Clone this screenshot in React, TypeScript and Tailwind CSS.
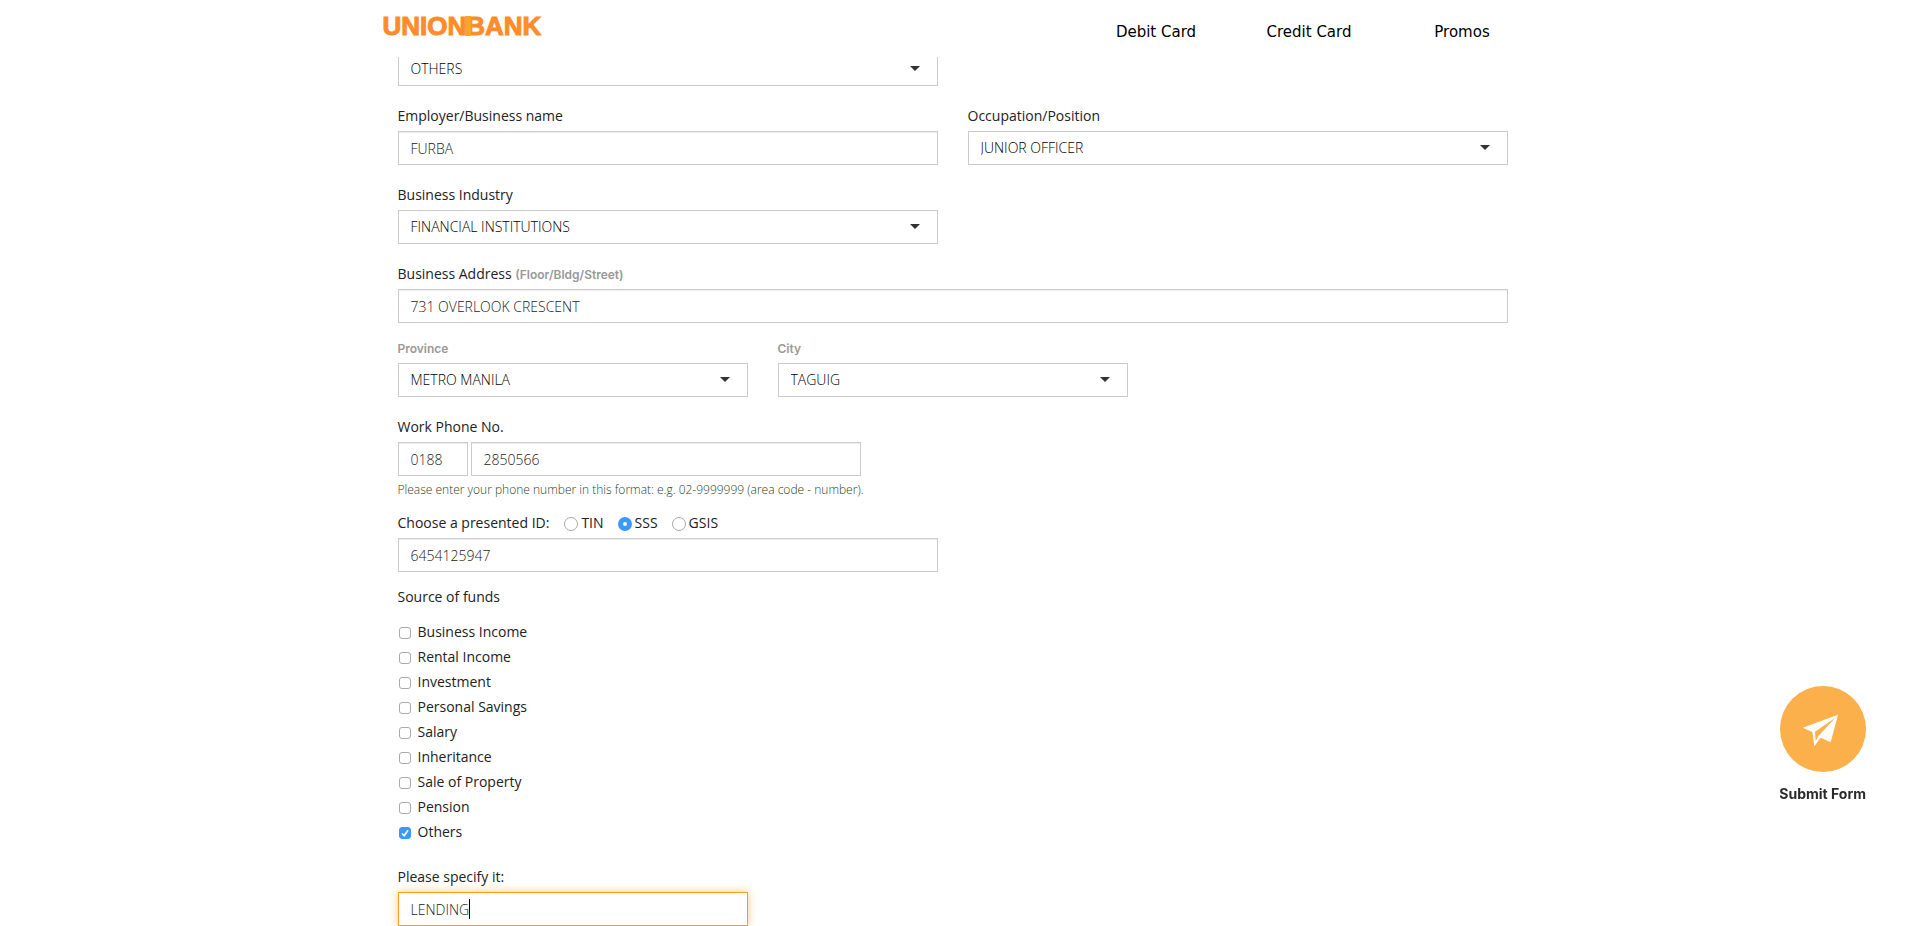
import type { InputHTMLAttributes, ReactNode } from "react";

const labelText = "font-['Open_Sans','Noto_Sans',sans-serif] text-sm leading-5 text-[#222222]";
const mutedText = "font-['Inter',sans-serif] text-xs font-semibold text-[#999999]";

interface TextBoxProps extends InputHTMLAttributes<HTMLInputElement> {
  highlighted?: boolean;
}

function TextBox({ highlighted = false, ...rest }: TextBoxProps) {
  const frame = highlighted
    ? "border-[#f5a01e] shadow-[0_0_8px_rgba(245,160,30,0.6)]"
    : "border-[#cccccc] shadow-[inset_0_1px_1px_rgba(0,0,0,0.075)]";
  return (
    <input
      type="text"
      className={`block h-[34px] w-full border bg-white px-3 text-sm font-light text-[#222222] outline-none ${frame}`}
      {...rest}
    />
  );
}

function SelectBox({ id, value, label }: { id: string; value: string; label?: string }) {
  return (
    <div className="relative">
      <select
        id={id}
        aria-label={label}
        defaultValue={value}
        className="block h-[34px] w-full appearance-none border border-[#cccccc] bg-white px-3 text-sm font-light text-black outline-none"
      >
        <option>{value}</option>
      </select>
      <svg
        viewBox="0 0 10 5"
        className="pointer-events-none absolute top-[14px] right-[18px] h-[5px] w-[10px]"
        aria-hidden="true"
      >
        <path d="M0 0H10L5 5Z" fill="#333333" />
      </svg>
    </div>
  );
}

function Field({ id, label, children }: { id: string; label: ReactNode; children: ReactNode }) {
  return (
    <div>
      <label htmlFor={id} className={`mb-[5px] block ${labelText}`}>
        {label}
      </label>
      {children}
    </div>
  );
}

const navItems = ["Debit Card", "Credit Card", "Promos"];

const idTypes = ["TIN", "SSS", "GSIS"];

const fundSources = [
  "Business Income",
  "Rental Income",
  "Investment",
  "Personal Savings",
  "Salary",
  "Inheritance",
  "Sale of Property",
  "Pension",
  "Others",
];

function Header() {
  return (
    <header className="fixed inset-x-0 top-0 z-10 h-[57px] bg-white">
      <div className="mx-auto flex max-w-[1140px] items-start justify-between">
        <a
          href="#home"
          className="relative mt-3 font-['Liberation_Sans',Arial,sans-serif] text-[26px] leading-7 font-bold text-[#ff8c28] [-webkit-text-stroke:1px_#ff8c28]"
        >
          UNIONBANK
          <span className="absolute top-1 left-[82px] h-5 w-[6px] bg-[#f9a526]" />
        </a>
        <nav className="-mr-4 flex pt-5">
          {navItems.map((name) => (
            <a
              key={name}
              href="#cards"
              className="w-[153px] text-center font-['DejaVu_Sans',sans-serif] text-[15px] leading-6 text-black"
            >
              {name}
            </a>
          ))}
        </nav>
      </div>
    </header>
  );
}

function SubmitButton() {
  return (
    <button
      type="submit"
      form="work-details"
      className="fixed right-[39px] bottom-[122px] z-10 flex flex-col items-center gap-3 font-['Inter',sans-serif] text-sm leading-5 font-bold text-[#2b2b2b]"
    >
      <span className="block size-[86px] rounded-full bg-[#fbb04c]">
        <svg viewBox="0 0 258 258" className="size-full" aria-hidden="true">
          <path
            fill="#ffffff"
            fillRule="evenodd"
            d="M174 86L68 125L97 138L103 181L122 155L152 169ZM166 95L115 150L107 166L105 137Z"
          />
        </svg>
      </span>
      Submit Form
    </button>
  );
}

export default function App() {
  return (
    <div className="min-h-screen bg-white font-['Open_Sans','Noto_Sans',sans-serif]">
      <Header />
      <form
        id="work-details"
        className="mx-auto max-w-[1110px] pt-[52px]"
        onSubmit={(e) => e.preventDefault()}
      >
        <div className="flex flex-col gap-5">
          <div className="grid grid-cols-2 gap-x-[30px]">
            <SelectBox id="work-type" value="OTHERS" label="Nature of work" />
          </div>
          <div className="grid grid-cols-2 gap-x-[30px]">
            <Field id="employer" label="Employer/Business name">
              <TextBox id="employer" defaultValue="FURBA" />
            </Field>
            <Field id="occupation" label="Occupation/Position">
              <SelectBox id="occupation" value="JUNIOR OFFICER" />
            </Field>
          </div>
          <div className="grid grid-cols-2 gap-x-[30px]">
            <Field id="industry" label="Business Industry">
              <SelectBox id="industry" value="FINANCIAL INSTITUTIONS" />
            </Field>
          </div>
          <div>
            <Field
              id="address"
              label={
                <>
                  Business Address{" "}
                  <span className={`leading-4 ${mutedText}`}>(Floor/Bldg/Street)</span>
                </>
              }
            >
              <TextBox id="address" defaultValue="731 OVERLOOK CRESCENT" />
            </Field>
            <div className="mt-4 grid grid-cols-3 gap-x-[30px]">
              <div>
                <label htmlFor="province" className={`mb-1 block leading-5 ${mutedText}`}>
                  Province
                </label>
                <SelectBox id="province" value="METRO MANILA" />
              </div>
              <div>
                <label htmlFor="city" className={`mb-1 block leading-5 ${mutedText}`}>
                  City
                </label>
                <SelectBox id="city" value="TAGUIG" />
              </div>
            </div>
          </div>
          <Field id="phone" label="Work Phone No.">
            <div className="flex gap-[3px]">
              <div className="w-[70px]">
                <TextBox aria-label="Area code" defaultValue="0188" />
              </div>
              <div className="w-[390px]">
                <TextBox id="phone" defaultValue="2850566" />
              </div>
            </div>
            <p className="mt-1 text-xs leading-5 font-light text-[#1f431f]">
              Please enter your phone number in this format: e.g. 02-9999999 (area code - number).
            </p>
          </Field>
        </div>

        <fieldset className={`mt-[13px] mb-[5px] flex items-center ${labelText}`}>
          <legend className="float-left mr-[15px]">Choose a presented ID:</legend>
          <div className="flex gap-[14px]">
            {idTypes.map((name) => (
              <label key={name} className="flex items-center gap-[3px]">
                <input
                  type="radio"
                  name="id-type"
                  defaultChecked={name === "SSS"}
                  className="mt-[2px] size-[14px] appearance-none rounded-full border border-[#aaaaaa] bg-white checked:border-[5px] checked:border-[#3b99fc]"
                />
                {name}
              </label>
            ))}
          </div>
        </fieldset>
        <div className="grid grid-cols-2 gap-x-[30px]">
          <TextBox aria-label="ID number" defaultValue="6454125947" />
        </div>

        <fieldset className={`mt-[15px] ${labelText}`}>
          <legend className="mb-3">Source of funds</legend>
          {fundSources.map((name) => (
            <label key={name} className="flex h-[25px] items-center gap-[7px] pl-[1px]">
              <input
                type="checkbox"
                defaultChecked={name === "Others"}
                className="peer mt-[2px] size-3 appearance-none rounded-[3px] border border-[#aaaaaa] bg-white checked:border-[#3b99fc] checked:bg-[#3b99fc]"
              />
              <svg
                viewBox="0 0 12 12"
                className="-ml-[19px] mt-[2px] size-3 opacity-0 peer-checked:opacity-100"
                aria-hidden="true"
              >
                <path d="M3 6.5L5.2 8.7L9 3.2" fill="none" stroke="#ffffff" strokeWidth="1.6" />
              </svg>
              {name}
            </label>
          ))}
        </fieldset>

        <div className="mt-[23px] grid grid-cols-3 gap-x-[30px]">
          <Field id="specify" label="Please specify it:">
            <div className="relative">
              <TextBox id="specify" defaultValue="LENDING" highlighted />
              <span className="absolute top-[7px] left-[71px] h-5 w-px bg-black" />
            </div>
          </Field>
        </div>
      </form>
      <SubmitButton />
    </div>
  );
}
